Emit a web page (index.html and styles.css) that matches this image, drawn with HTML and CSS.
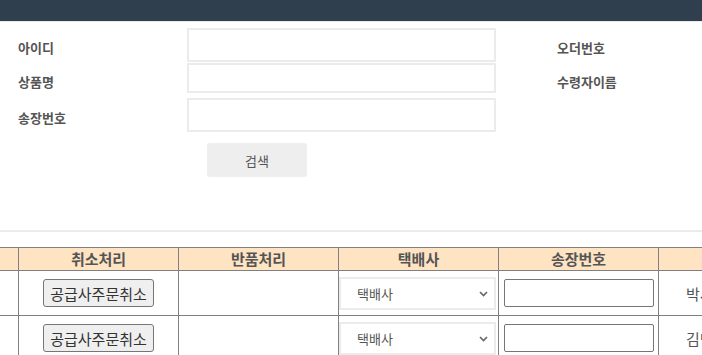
FILE: index.html
```html
<!DOCTYPE html>
<html lang="ko">
<head>
    <meta charset="UTF-8" />
    <title>주문 관리</title>
    <link rel="stylesheet" href="styles.css">
</head>
<body>
<div class="topbar"></div>

<form class="search-form">
    <div class="form-row row-a">
        <label class="field-label">아이디</label>
        <input type="text" class="field-input">
        <label class="field-label side">오더번호</label>
    </div>
    <div class="form-row row-b">
        <label class="field-label">상품명</label>
        <input type="text" class="field-input">
        <label class="field-label side">수령자이름</label>
    </div>
    <div class="form-row row-c">
        <label class="field-label">송장번호</label>
        <input type="text" class="field-input">
    </div>
    <div class="search-actions">
        <button type="button" class="search-button">검색</button>
    </div>
</form>

<hr class="divider">

<div class="table-wrap">
    <table class="order-table">
        <thead>
            <tr>
                <th></th>
                <th>취소처리</th>
                <th>반품처리</th>
                <th>택배사</th>
                <th>송장번호</th>
                <th></th>
            </tr>
        </thead>
        <tbody>
            <tr>
                <td></td>
                <td><button type="button" class="cancel-button">공급사주문취소</button></td>
                <td></td>
                <td>
                    <div class="select-box">
                        <select class="courier-select">
                            <option>택배사</option>
                        </select>
                        <svg class="select-arrow" width="9" height="6" viewBox="0 0 9 6"><path d="M1 1l3.5 3.5L8 1" fill="none" stroke="#666" stroke-width="1.6"/></svg>
                    </div>
                </td>
                <td><input type="text" class="invoice-input"></td>
                <td class="name-cell">박서연</td>
            </tr>
            <tr>
                <td></td>
                <td><button type="button" class="cancel-button">공급사주문취소</button></td>
                <td></td>
                <td>
                    <div class="select-box">
                        <select class="courier-select">
                            <option>택배사</option>
                        </select>
                        <svg class="select-arrow" width="9" height="6" viewBox="0 0 9 6"><path d="M1 1l3.5 3.5L8 1" fill="none" stroke="#666" stroke-width="1.6"/></svg>
                    </div>
                </td>
                <td><input type="text" class="invoice-input"></td>
                <td class="name-cell">김민준</td>
            </tr>
        </tbody>
    </table>
</div>
</body>
</html>
```

FILE: styles.css
```css
html, body { margin: 0; padding: 0; }
body {
    width: 702px; overflow: hidden;
    font-family: "Noto Sans CJK KR", "Noto Sans", sans-serif;
    color: #555; background: #fff;
}
.topbar { height: 21px; background: #2f3f4e; border-bottom: 1px solid #e9ecef; }

.search-form { padding: 6px 0 0 18px; }
.form-row { display: flex; align-items: flex-start; }
.row-a { height: 34px; margin-bottom: 1px; }
.row-b { height: 30px; margin-bottom: 5px; }
.row-c { height: 34px; }
.field-label {
    width: 169px; font-size: 13px; font-weight: 700; color: #555;
    line-height: 17px; padding-top: 11px;
}
.row-b .field-label { padding-top: 10px; }
.field-label.side { width: auto; margin-left: 61px; }
.field-input {
    width: 309px; height: 100%; box-sizing: border-box; margin: 0;
    border: 2px solid #ebebeb; border-radius: 1px; outline: none;
}
.search-actions { padding: 11px 0 0 189px; }
.search-button {
    width: 100px; height: 34px; border: none; border-radius: 3px;
    background: #eeeeee; color: #555; font-family: inherit; font-size: 13px;
}

.divider { height: 2px; border: none; background: #ebebeb; margin: 53px 0 15px 0; }

.table-wrap { overflow: hidden; }
.order-table {
    border-collapse: collapse; table-layout: fixed;
    width: 960px; margin-left: -142px;
}
.order-table th, .order-table td { width: 159px; border: 1px solid #808080; padding: 0; }
.order-table th {
    height: 22px; background: #ffe4c4; color: #555;
    font-size: 15px; font-weight: 700; line-height: 20px;
}
.order-table td { height: 44px; text-align: center; vertical-align: middle; }
.cancel-button {
    height: 28px; padding: 0 6px; font-family: inherit; font-size: 15px; color: #333;
    background: #efefef; border: 1px solid #767676; border-radius: 3px;
}
.select-box { position: relative; width: 157px; margin-left: 0; }
.courier-select {
    display: block; width: 157px; height: 33px; margin: 0;
    padding: 0 0 0 16px; font-family: inherit; font-size: 13px; color: #555;
    border: 2px solid #ebebeb; border-radius: 0; background: #fff;
    -webkit-appearance: none; appearance: none; outline: none;
}
.select-arrow { position: absolute; right: 8px; top: 14px; pointer-events: none; }
.invoice-input {
    width: 150px; height: 28px; box-sizing: border-box; margin: 0;
    border: 1px solid #767676; border-radius: 2px;
}
.name-cell { text-align: left !important; padding-left: 27px !important; font-size: 15px; color: #555; }
```
